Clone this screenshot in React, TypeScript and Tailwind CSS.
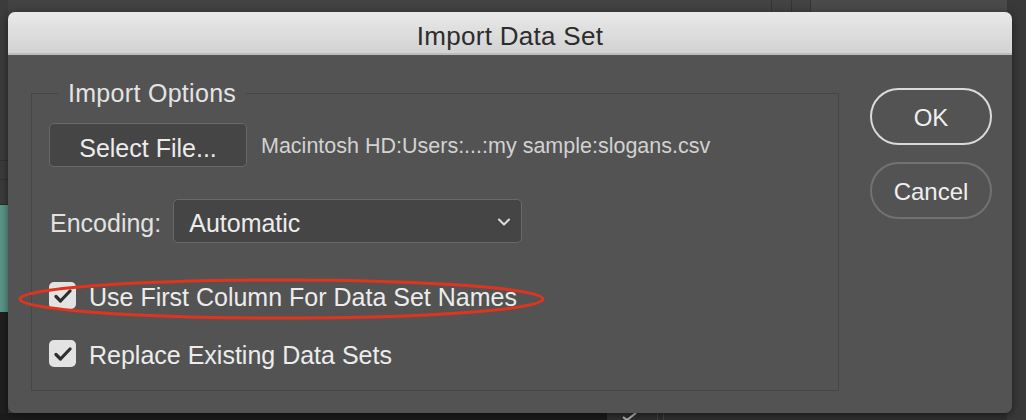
import { ChevronDown } from 'lucide-react';

function CheckBox() {
  return (
    <div className="w-[27px] h-[27px] rounded-[5px] bg-[#e3e3e3] flex items-center justify-center shrink-0">
      <svg width="18" height="14" viewBox="0 0 18 14" fill="none">
        <path d="M2 7.5 L6.5 12 L16 2" stroke="#2e2e2e" strokeWidth="3.2" strokeLinecap="round" strokeLinejoin="round" />
      </svg>
    </div>
  );
}

export default function App() {
  const font = { fontFamily: '"Liberation Sans", Arial, sans-serif' };

  return (
    <div className="relative w-full h-[420px] bg-[#434343] overflow-hidden" style={font}>
      {/* app behind the dialog */}
      <div className="absolute left-0 top-0 w-[8px] h-[205px] bg-[#3c3c3c] border-b border-[#2e2e2e]" />
      <div className="absolute left-0 top-[160px] w-[8px] h-[20px] border-y border-[#333]" />
      <div className="absolute left-0 top-[205px] w-[8px] h-[107px] bg-[#5c9789]" />
      <div className="absolute left-0 top-[312px] w-[8px] h-[108px] bg-[#1f1f1f]" />
      <div className="absolute left-0 top-[413px] w-full h-[7px] bg-[#1c1c1c]" />
      <div className="absolute left-[607px] top-[413px] w-[419px] h-[7px] bg-[#313131]" />
      <svg className="absolute left-[622px] top-[413px]" width="16" height="7" viewBox="0 0 16 7" fill="none">
        <path d="M1 4 L5 7 M5 7 L14 0" stroke="#bdbdbd" strokeWidth="2" />
      </svg>
      <div className="absolute left-[657px] top-[413px] w-px h-[7px] bg-[#444]" />
      <div className="absolute left-[663px] top-[413px] w-px h-[7px] bg-[#444]" />
      <div className="absolute left-[771px] top-0 w-px h-[12px] bg-[#353535]" />
      <div className="absolute left-[791px] top-0 w-px h-[12px] bg-[#353535]" />
      <div className="absolute left-[810px] top-0 w-px h-[12px] bg-[#353535]" />
      <div className="absolute left-[811px] top-0 w-[196px] h-[12px] bg-[#4a4a4a]" />
      <div className="absolute right-0 top-0 w-[19px] h-full bg-[#393939]" />

      <div className="relative pt-[12px] pl-[8px]">
        <div className="w-[1004px] h-[401px] rounded-[7px] bg-[#535353] overflow-hidden shadow-[0_2px_10px_rgba(0,0,0,0.5)] flex flex-col">
          <div className="h-[43px] shrink-0 bg-gradient-to-b from-[#e9e9e9] to-[#d2d2d2] border-b-2 border-[#bcbcbc] flex items-center justify-center pt-[6px]">
            <span className="text-[26px] leading-none text-[#2c2c2c] tracking-[0.3px]">Import Data Set</span>
          </div>

          <div className="flex flex-1">
            <fieldset className="ml-[23px] mt-[26px] w-[808px] h-[310px] border border-[#464646] pl-[17px] pr-4 pb-0">
              <legend className="ml-[9px] px-[10px] text-[25px] leading-[24px] text-[#e4e4e4] tracking-[0.3px]">Import Options</legend>

              <div className="mt-[18px] flex items-center">
                <button className="w-[198px] h-[44px] rounded-[5px] bg-[#454545] border border-[#696969] text-[25px] text-[#ececec] pt-[5px] leading-[30px]">
                  Select File...
                </button>
                <span className="ml-[14px] text-[21.5px] text-[#d2d2d2] pt-[3px]">Macintosh HD:Users:...:my sample:slogans.csv</span>
              </div>

              <div className="mt-[32px] flex items-center">
                <span className="text-[25px] text-[#e2e2e2] ml-px pt-[5px]">Encoding:</span>
                <div className="ml-[12px] w-[349px] h-[44px] rounded-[5px] bg-[#454545] border border-[#696969] flex items-center justify-between pl-[15px] pr-[7px]">
                  <span className="text-[25px] text-[#ececec] pt-[5px]">Automatic</span>
                  <ChevronDown size={20} strokeWidth={2.5} className="text-[#dcdcdc] mt-[2px]" />
                </div>
              </div>

              <div className="relative mt-[39px] flex items-center gap-[13px] h-[27px]">
                <CheckBox />
                <span className="text-[25px] text-[#ececec] pt-[4px]">Use First Column For Data Set Names</span>
                <svg className="absolute left-[-31px] top-[-4px]" width="527" height="42" viewBox="0 0 527 42" fill="none">
                  <ellipse cx="263.5" cy="21" rx="261.5" ry="19" stroke="#e0341f" strokeWidth="3" />
                </svg>
              </div>

              <div className="mt-[31px] flex items-center gap-[13px] h-[27px]">
                <CheckBox />
                <span className="text-[25px] text-[#ececec] pt-[4px]">Replace Existing Data Sets</span>
              </div>
            </fieldset>

            <div className="ml-[31px] mt-[33px] flex flex-col gap-[17px]">
              <button className="w-[122px] h-[57px] rounded-full border-2 border-[#dadada] text-[24px] text-[#efefef] pt-[3px]">OK</button>
              <button className="w-[122px] h-[57px] rounded-full border-2 border-[#727272] text-[24px] text-[#efefef] pt-[3px]">Cancel</button>
            </div>
          </div>
        </div>
      </div>
    </div>
  );
}
